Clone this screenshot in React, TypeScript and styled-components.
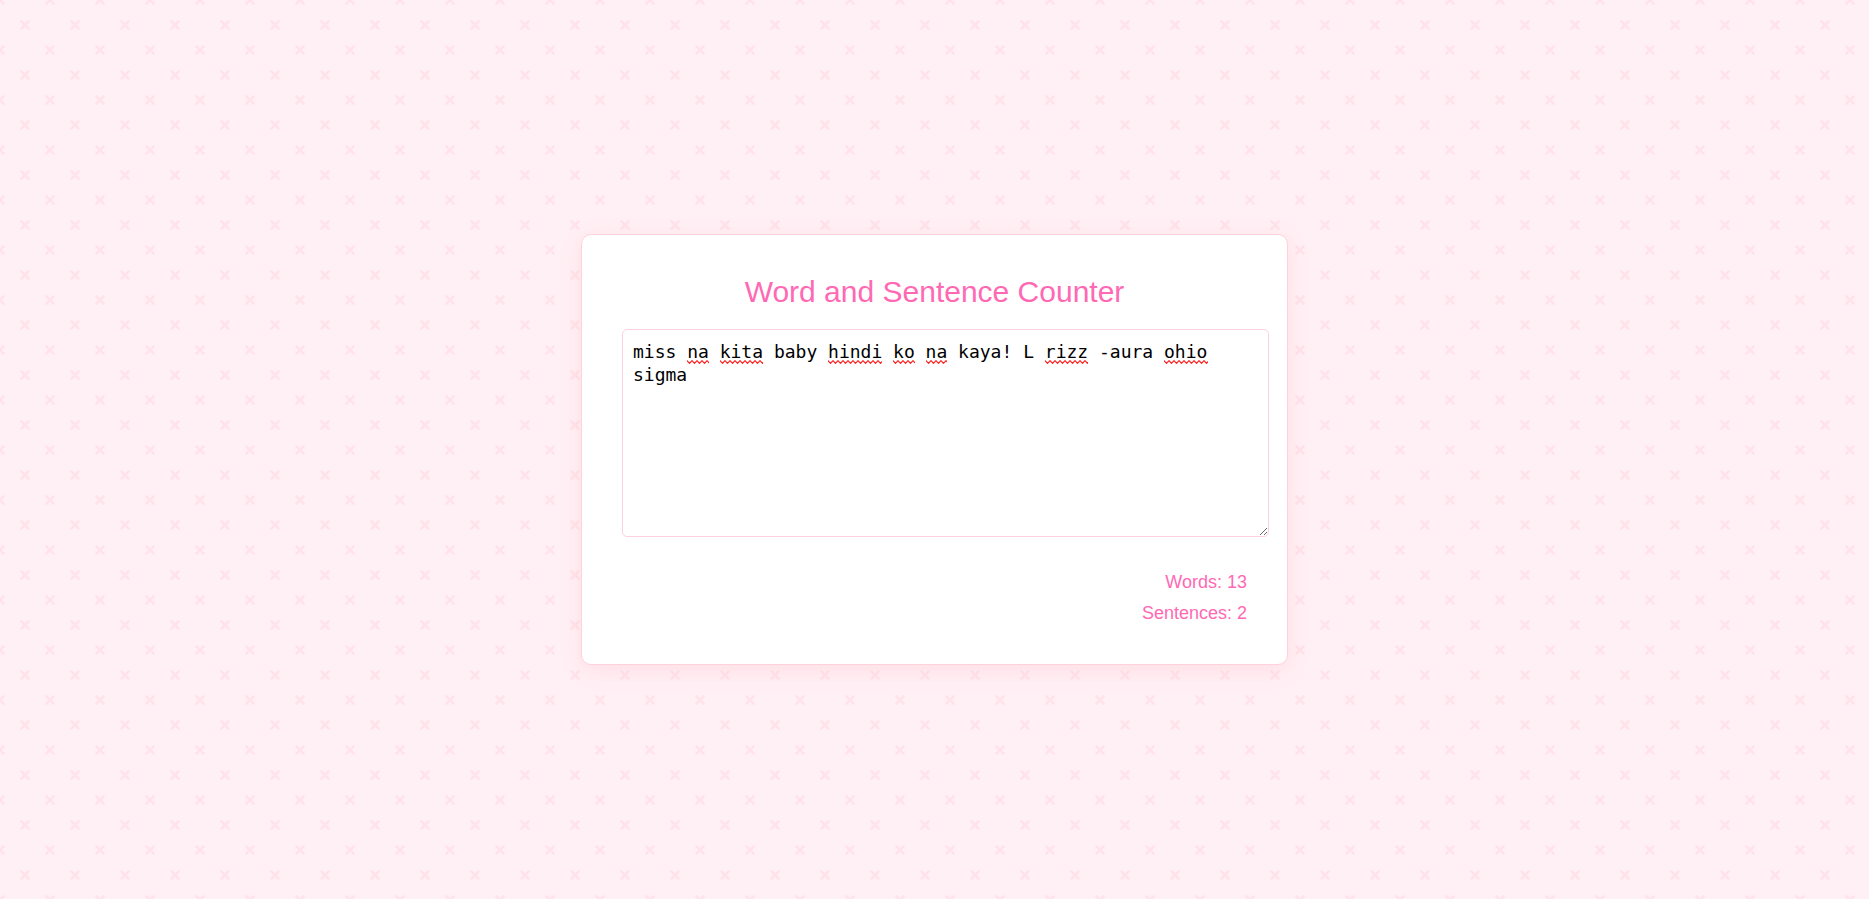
import { Fragment, useState } from "react";
import styled, { createGlobalStyle, css } from "styled-components";

const crossTile = encodeURIComponent(
  `<svg xmlns="http://www.w3.org/2000/svg" width="50" height="50" viewBox="0 0 50 50">
    <path d="M20.7 20.7l8.6 8.6m0-8.6l-8.6 8.6M-4.3-4.3l8.6 8.6m0-8.6l-8.6 8.6M45.7-4.3l8.6 8.6m0-8.6l-8.6 8.6M-4.3 45.7l8.6 8.6m0-8.6l-8.6 8.6M45.7 45.7l8.6 8.6m0-8.6l-8.6 8.6" stroke="#ffe2ea" stroke-width="2.6" fill="none"/>
  </svg>`
);

const waveTile = encodeURIComponent(
  `<svg xmlns="http://www.w3.org/2000/svg" width="5" height="4" viewBox="0 0 5 4">
    <path d="M-1.25 2L0 .7L2.5 3.3L5 .7L6.25 2" stroke="#ff1c1c" stroke-width="1.2" fill="none"/>
  </svg>`
);

const GlobalStyle = createGlobalStyle`
  body {
    margin: 0;
    background: #fff0f5 url("data:image/svg+xml,${crossTile}") 0 0 / 50px 50px;
    font-family: Arial, "Liberation Sans", sans-serif;
    color: #ff69b4;
  }
`;

const Page = styled.main`
  min-height: 100vh;
  display: flex;
  align-items: center;
  justify-content: center;
`;

const Card = styled.section`
  flex: 0 1 625px;
  padding: 40px;
  background: #fff;
  border: 1px solid #ffd1dc;
  border-radius: 10px;
  box-shadow: 0 5px 20px rgba(255, 182, 193, 0.3);
`;

const Title = styled.h1`
  margin: 0 0 20px;
  font-size: 30px;
  line-height: 34px;
  font-weight: 400;
  text-align: center;
`;

const Editor = styled.div`
  position: relative;
  height: 208px;
`;

const textLayout = css`
  box-sizing: border-box;
  width: calc(100% + 22px);
  height: 208px;
  margin: 0;
  padding: 10px;
  border: 1px solid transparent;
  font: 18px/23px "DejaVu Sans Mono", monospace;
  white-space: pre-wrap;
  overflow-wrap: break-word;
`;

const TextInput = styled.textarea`
  ${textLayout}
  display: block;
  border-color: #ffd1dc;
  border-radius: 5px;
  background: #fff;
  color: #000;
  resize: vertical;
  outline: none;
`;

const SpellingLayer = styled.div`
  ${textLayout}
  position: absolute;
  inset: 0 auto auto 0;
  color: transparent;
  pointer-events: none;
  overflow: hidden;
`;

const Misspelled = styled.span`
  padding-bottom: 2px;
  background: url("data:image/svg+xml,${waveTile}") left bottom / 5px 4px repeat-x;
`;

const Counts = styled.div`
  margin-top: 35px;
  font-size: 18px;
  line-height: 21px;
  text-align: right;
`;

const Count = styled.p`
  margin: 0 0 10px;

  &:last-child {
    margin-bottom: 0;
  }
`;

const unknownWords = new Set(["na", "kita", "hindi", "ko", "rizz", "ohio"]);

export default function App() {
  const [text, setText] = useState(
    "miss na kita baby hindi ko na kaya! L rizz -aura ohio sigma"
  );
  const words = text.split(/\s+/).filter(Boolean).length;
  const sentences = text.split(/[.!?]+/).filter((s) => s.trim()).length;

  return (
    <>
      <GlobalStyle />
      <Page>
        <Card>
          <Title id="title">Word and Sentence Counter</Title>
          <Editor>
            <TextInput
              aria-labelledby="title"
              spellCheck={false}
              value={text}
              onChange={(e) => setText(e.target.value)}
            />
            <SpellingLayer aria-hidden="true">
              {text.split(/(\s+)/).map((part, i) =>
                unknownWords.has(part) ? (
                  <Misspelled key={i}>{part}</Misspelled>
                ) : (
                  <Fragment key={i}>{part}</Fragment>
                )
              )}
            </SpellingLayer>
          </Editor>
          <Counts>
            <Count>Words: {words}</Count>
            <Count>Sentences: {sentences}</Count>
          </Counts>
        </Card>
      </Page>
    </>
  );
}
